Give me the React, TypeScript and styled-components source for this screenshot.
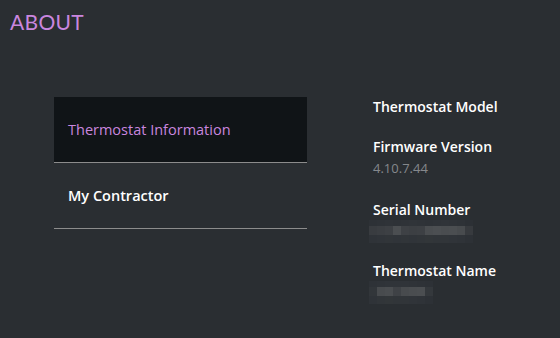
import React from 'react';
import styled, { createGlobalStyle } from 'styled-components';

const GlobalStyle = createGlobalStyle`
  html, body {
    margin: 0;
    padding: 0;
    background: #2a2e32;
  }
  body {
    font-family: "Open Sans", Lato, sans-serif;
  }
`;

const rowHeights = [6, 9, 8];

const serialRows = [
  ['#2d3136', '#2e3237', '#2f3338', '#2e3237', '#2f3338', '#303439', '#2f3338', '#2e3237', '#2f3338', '#303439', '#2f3338', '#2e3237', '#2c3035'],
  ['#393c40', '#3b3e42', '#3d4044', '#4b4e51', '#3e4145', '#3c3f43', '#3d4044', '#4a4d50', '#4c4f52', '#4a4d50', '#4b4e51', '#484b4e', '#373a3e'],
  ['#2f3338', '#303439', '#313539', '#303439', '#313539', '#303439', '#313539', '#323639', '#313539', '#313539', '#303439', '#2f3338', '#2d3136'],
];

const nameRows = [
  ['#2e3237', '#2f3338', '#303439', '#303439', '#303439', '#2f3338', '#2e3237', '#2d3136'],
  ['#32363a', '#484b4e', '#4a4d50', '#3f4246', '#484b4e', '#4a4d50', '#4b4e51', '#34383c'],
  ['#2f3338', '#313539', '#323639', '#313539', '#313539', '#303439', '#2f3338', '#2d3136'],
];

const Page = styled.div`
  width: 560px;
  height: 338px;
  background: #2a2e32;
  overflow: hidden;
  box-sizing: border-box;
  padding: 10px 0 0 10px;
`;

const Title = styled.h1`
  margin: 0;
  font-family: Lato, sans-serif;
  font-size: 21px;
  font-weight: 400;
  color: #c986df;
  letter-spacing: 0.3px;
  line-height: 24px;
`;

const Body = styled.div`
  display: flex;
  padding: 63px 0 0 44px;
`;

const Menu = styled.div`
  width: 253px;
  display: flex;
  flex-direction: column;
`;

const MenuItem = styled.div<{ $active?: boolean }>`
  height: 66px;
  box-sizing: border-box;
  display: flex;
  align-items: center;
  padding-left: 14px;
  padding-bottom: 1px;
  font-size: 14.5px;
  color: ${(p) => (p.$active ? '#c986df' : '#ffffff')};
  font-weight: ${(p) => (p.$active ? 400 : 600)};
  background: ${(p) => (p.$active ? '#101417' : 'transparent')};
  border-bottom: 1px solid #8c8c8c;
`;

const Info = styled.div`
  margin-left: 66px;
  padding-top: 1px;
  display: flex;
  flex-direction: column;
`;

const Field = styled.div<{ $gap: number }>`
  margin-bottom: ${(p) => p.$gap}px;
  display: flex;
  flex-direction: column;
`;

const Label = styled.div`
  font-size: 14px;
  font-weight: 600;
  color: #ffffff;
  line-height: 18px;
`;

const Value = styled.div`
  font-size: 13px;
  color: #85888c;
  line-height: 16px;
  margin-top: 4px;
`;

const Mosaic = styled.div`
  margin-top: 1px;
  display: flex;
  flex-direction: column;
  margin-left: -4px;
`;

const MosaicRow = styled.div<{ $h: number }>`
  display: flex;
  height: ${(p) => p.$h}px;
`;

const Cell = styled.div<{ $c: string }>`
  width: 8px;
  background: ${(p) => p.$c};
`;

const Blur = ({ rows }: { rows: string[][] }) => (
  <Mosaic>
    {rows.map((r, i) => (
      <MosaicRow key={i} $h={rowHeights[i]}>
        {r.map((c, j) => (
          <Cell key={j} $c={c} />
        ))}
      </MosaicRow>
    ))}
  </Mosaic>
);

export default function App() {
  return (
    <Page>
      <GlobalStyle />
      <Title>ABOUT</Title>
      <Body>
        <Menu>
          <MenuItem $active>Thermostat Information</MenuItem>
          <MenuItem>My Contractor</MenuItem>
        </Menu>
        <Info>
          <Field $gap={22}>
            <Label>Thermostat Model</Label>
          </Field>
          <Field $gap={25}>
            <Label>Firmware Version</Label>
            <Value>4.10.7.44</Value>
          </Field>
          <Field $gap={19}>
            <Label>Serial Number</Label>
            <Blur rows={serialRows} />
          </Field>
          <Field $gap={0}>
            <Label>Thermostat Name</Label>
            <Blur rows={nameRows} />
          </Field>
        </Info>
      </Body>
    </Page>
  );
}
